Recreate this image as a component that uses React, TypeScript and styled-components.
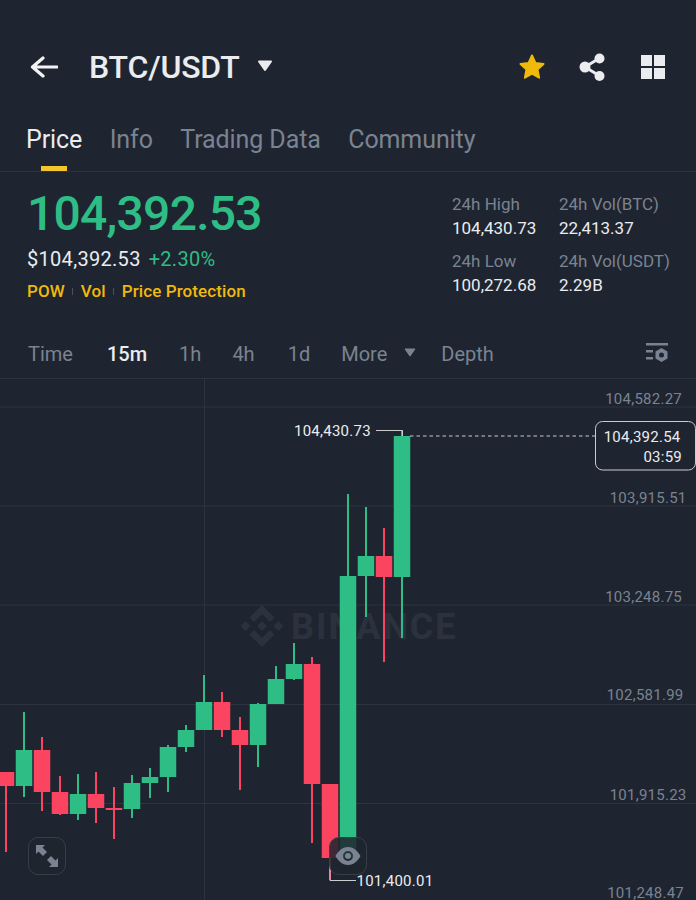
import styled, { createGlobalStyle } from "styled-components";

const GlobalStyle = createGlobalStyle`
  html, body {
    margin: 0;
    padding: 0;
    background: #1f2530;
  }
  body {
    font-family: Roboto, "Noto Sans", sans-serif;
    overflow: hidden;
  }
`;

const GREEN = "#2ebd85";
const RED = "#fb4560";

const Page = styled.div`
  width: 696px;
  height: 900px;
  overflow: hidden;
  background: #1f2530;
  color: #eaecef;
`;

const Header = styled.header`
  display: flex;
  align-items: center;
  height: 32px;
  padding: 51px 31px 0 30px;
`;

const BackIcon = styled.svg`
  width: 28px;
  height: 24px;
  margin-right: 31px;
`;

const Pair = styled.h1`
  margin: 0;
  font-size: 32px;
  line-height: 32px;
  font-weight: 500;
  letter-spacing: -0.2px;
`;

const PairCaret = styled.svg`
  width: 16px;
  height: 12px;
  margin-left: 17px;
  margin-top: -3px;
`;

const HeaderActions = styled.div`
  display: flex;
  align-items: center;
  margin-left: auto;
`;

const ActionIcon = styled.svg<{ $gap?: number }>`
  display: block;
  margin-left: ${(p) => p.$gap ?? 0}px;
`;

const Tabs = styled.nav`
  display: flex;
  gap: 27.5px;
  height: 47px;
  margin-top: 41px;
  padding: 0 26px;
  border-bottom: 1px solid #2d343f;
`;

const Tab = styled.div<{ $active?: boolean }>`
  position: relative;
  font-size: 25px;
  line-height: 32px;
  letter-spacing: -0.1px;
  color: ${(p) => (p.$active ? "#eaecef" : "#7a8391")};

  &::after {
    content: "";
    display: ${(p) => (p.$active ? "block" : "none")};
    position: absolute;
    left: 15px;
    bottom: 0;
    width: 26px;
    height: 5px;
    background: #f3c62d;
  }
`;

const Ticker = styled.section`
  display: flex;
  justify-content: space-between;
  height: 161px;
  padding: 0 0 0 27px;
`;

const PriceColumn = styled.div`
  display: flex;
  flex-direction: column;
`;

const LastPrice = styled.div`
  font-size: 48px;
  line-height: 56px;
  font-weight: 500;
  margin-top: 14px;
  letter-spacing: -0.75px;
  color: ${GREEN};
`;

const FiatRow = styled.div`
  display: flex;
  gap: 8px;
  font-size: 20px;
  line-height: 26px;
  letter-spacing: 0.3px;
  margin-top: 4px;
`;

const Change = styled.span`
  color: ${GREEN};
`;

const TagRow = styled.div`
  display: flex;
  align-items: center;
  gap: 7.5px;
  margin-top: 7px;
  font-size: 17px;
  line-height: 24px;
  letter-spacing: 0.1px;
  font-weight: 500;
  color: #f0b90b;
`;

const TagDivider = styled.i`
  width: 1px;
  height: 7px;
  background: #4a515c;
`;

const Stats = styled.div`
  display: grid;
  grid-template-columns: 107px 137px;
  align-content: start;
  row-gap: 9px;
  margin-top: 20px;
`;

const StatCell = styled.div`
  display: flex;
  flex-direction: column;
`;

const StatLabel = styled.span`
  font-size: 17px;
  line-height: 24px;
  color: #7a8391;
`;

const StatValue = styled.span`
  font-size: 17px;
  line-height: 24px;
  color: #eaecef;
`;

const Intervals = styled.div`
  display: flex;
  align-items: center;
  height: 42px;
  padding: 0 28px 3px;
  font-size: 20px;
  color: #7a8391;
  border-bottom: 1px solid #2d343f;
`;

const Interval = styled.span<{ $active?: boolean; $gap: number }>`
  margin-right: ${(p) => p.$gap}px;
  color: ${(p) => (p.$active ? "#eaecef" : "#7a8391")};
  font-weight: ${(p) => (p.$active ? 500 : 400)};
`;

const IntervalCaret = styled.svg`
  width: 12px;
  height: 9px;
  margin-right: 25px;
  margin-top: -3px;
`;

const SettingsIcon = styled.svg`
  width: 24px;
  height: 24px;
  margin-left: auto;
  margin-right: -1px;
`;

const ChartArea = styled.div`
  position: relative;
  width: 696px;
  height: 521px;
`;

const ChartSvg = styled.svg`
  display: block;
  width: 696px;
  height: 521px;
`;

const AxisLabel = styled.text`
  font-family: Roboto, sans-serif;
  font-size: 15px;
  letter-spacing: 0.25px;
  fill: #7a8391;
  text-anchor: end;
`;

const MarkLabel = styled.text`
  font-family: Roboto, sans-serif;
  font-size: 15px;
  letter-spacing: 0.25px;
  fill: #eaecef;
`;

const Watermark = styled.text`
  font-family: Roboto, sans-serif;
  font-size: 36px;
  font-weight: 700;
  letter-spacing: 2px;
  fill: #2b323d;
`;

const OverlayButton = styled.div<{ $left: number }>`
  position: absolute;
  left: ${(p) => p.$left}px;
  top: 458px;
  width: 38px;
  height: 38px;
  box-sizing: border-box;
  display: flex;
  align-items: center;
  justify-content: center;
  border: 1.5px solid #373e49;
  border-radius: 10px;
  background: rgba(31, 37, 48, 0.86);
`;

// x is derived from the index, columns are 18px apart
const candles: [number, number, number, number, boolean][] = [
  [772, 772, 786, 852, false],
  [712, 750, 786, 797, true],
  [737, 750, 792, 811, false],
  [776, 792, 814, 815, false],
  [774, 794, 814, 820, true],
  [772, 794, 808, 823, false],
  [787, 808, 810, 839, false],
  [775, 783, 809, 818, true],
  [768, 777, 783, 798, true],
  [745, 747, 777, 792, true],
  [725, 730, 747, 752, true],
  [675, 702, 730, 730, true],
  [692, 702, 730, 737, false],
  [717, 730, 745, 790, false],
  [703, 704, 745, 767, true],
  [666, 679, 704, 704, true],
  [643, 664, 679, 680, true],
  [657, 664, 784, 843, false],
  [784, 784, 858, 880, false],
  [494, 576, 858, 858, true],
  [507, 556, 576, 617, true],
  [528, 556, 577, 662, false],
  [430, 436, 577, 638, true],
];

const axis = [
  { price: "104,582.27", x: 682, y: 404 },
  { price: "103,915.51", x: 686.5, y: 503 },
  { price: "103,248.75", x: 682, y: 602 },
  { price: "102,581.99", x: 683.5, y: 700 },
  { price: "101,915.23", x: 686.5, y: 800 },
  { price: "101,248.47", x: 684, y: 898 },
];

const gridLines = [407, 506, 605, 704.5, 803.5];

const stats = [
  { label: "24h High", value: "104,430.73" },
  { label: "24h Vol(BTC)", value: "22,413.37" },
  { label: "24h Low", value: "100,272.68" },
  { label: "24h Vol(USDT)", value: "2.29B" },
];

const Caret = ({ color }: { color: string }) => (
  <path d="M2 1.5h12L8 10z" fill={color} stroke={color} strokeWidth="2" strokeLinejoin="round" />
);

const Chart = () => (
  <ChartSvg viewBox="0 379 696 521">
    {gridLines.map((y) => (
      <line key={y} x1="0" x2="696" y1={y} y2={y} stroke="#2d343f" strokeWidth="1" />
    ))}
    <line x1="204.5" x2="204.5" y1="379" y2="900" stroke="#2d343f" strokeWidth="1" />

    <g fill="#2b323d">
      <path d="M262 605l12.5 12.5-4.5 4.5-8-8-8 8-4.5-4.5z" />
      <path d="M262 647l12.5-12.5-4.5-4.5-8 8-8-8-4.5 4.5z" />
      <path d="M262 621l5 5-5 5-5-5z" />
      <path d="M245.500 621l5 5-5 5-5-5z" />
      <path d="M278.500 621l5 5-5 5-5-5z" />
    </g>
    <Watermark x="291" y="639">BINANCE</Watermark>

    {candles.map(([high, top, bottom, low, up], i) => {
      const cx = 6 + i * 18;
      const color = up ? GREEN : RED;
      return (
        <g key={i} fill={color}>
          <rect x={cx - 1} y={high} width="2" height={low - high} />
          <rect x={cx - 8.25} y={top} width="16.500" height={bottom - top} />
        </g>
      );
    })}

    {axis.map((a) => (
      <AxisLabel key={a.price} x={a.x} y={a.y}>{a.price}</AxisLabel>
    ))}

    <path d="M376 430.500h26.500v5.500" fill="none" stroke="#c9ccd1" strokeWidth="1" />
    <MarkLabel x="294" y="436">104,430.73</MarkLabel>
    <path d="M330 858v22.500h26" fill="none" stroke="#c9ccd1" strokeWidth="1" />
    <MarkLabel x="356.500" y="886">101,400.01</MarkLabel>

    <line x1="410" x2="595" y1="436" y2="436" stroke="#c9ccd1" strokeWidth="1" strokeDasharray="3.500 3" />
    <rect x="595.500" y="421.500" width="100" height="48.500" rx="7" fill="#1f2530" stroke="#c9ccd1" strokeWidth="1" />
    <MarkLabel x="680.500" y="442" textAnchor="end">104,392.54</MarkLabel>
    <MarkLabel x="682" y="462" textAnchor="end">03:59</MarkLabel>
  </ChartSvg>
);

export default function App() {
  return (
    <Page>
      <GlobalStyle />
      <Header>
        <BackIcon viewBox="0 0 28 24">
          <path d="M13 3L2.500 12 13 21M3 12h24" fill="none" stroke="#f2f3f5" strokeWidth="3.200" strokeLinecap="round" strokeLinejoin="round" />
        </BackIcon>
        <Pair>BTC/USDT</Pair>
        <PairCaret viewBox="0 0 16 12">
          <Caret color="#eaecef" />
        </PairCaret>
        <HeaderActions>
          <ActionIcon width="28" height="28" viewBox="0 0 28 28">
            <path d="M14 2.500l3.400 7.500 8.100 1-6 5.500 1.600 8.200L14 20.600l-7.100 4.100 1.600-8.200-6-5.500 8.100-1z" fill="#f0b90b" stroke="#f0b90b" strokeWidth="2" strokeLinejoin="round" />
          </ActionIcon>
          <ActionIcon $gap={33} width="26" height="28" viewBox="0 0 26 28">
            <path d="M20 5.500L6 14l14 8.500" fill="none" stroke="#eaecef" strokeWidth="3" />
            <circle cx="20.500" cy="5.500" r="5" fill="#eaecef" />
            <circle cx="6" cy="14" r="5.500" fill="#eaecef" />
            <circle cx="20.500" cy="23" r="5" fill="#eaecef" />
          </ActionIcon>
          <ActionIcon $gap={36} width="24" height="24" viewBox="0 0 24 24" fill="#eaecef">
            <rect x="0" y="0" width="11" height="11" />
            <rect x="13" y="0" width="11" height="11" />
            <rect x="0" y="13" width="11" height="11" />
            <rect x="13" y="13" width="11" height="11" />
          </ActionIcon>
        </HeaderActions>
      </Header>

      <Tabs>
        <Tab $active>Price</Tab>
        <Tab>Info</Tab>
        <Tab>Trading Data</Tab>
        <Tab>Community</Tab>
      </Tabs>

      <Ticker>
        <PriceColumn>
          <LastPrice>104,392.53</LastPrice>
          <FiatRow>
            <span>$104,392.53</span>
            <Change>+2.30%</Change>
          </FiatRow>
          <TagRow>
            <span>POW</span>
            <TagDivider />
            <span>Vol</span>
            <TagDivider />
            <span>Price Protection</span>
          </TagRow>
        </PriceColumn>
        <Stats>
          {stats.map((s) => (
            <StatCell key={s.label}>
              <StatLabel>{s.label}</StatLabel>
              <StatValue>{s.value}</StatValue>
            </StatCell>
          ))}
        </Stats>
      </Ticker>

      <Intervals>
        <Interval $gap={34}>Time</Interval>
        <Interval $gap={32} $active>15m</Interval>
        <Interval $gap={31}>1h</Interval>
        <Interval $gap={33}>4h</Interval>
        <Interval $gap={31}>1d</Interval>
        <Interval $gap={17}>More</Interval>
        <IntervalCaret viewBox="0 0 16 12">
          <Caret color="#7a8391" />
        </IntervalCaret>
        <Interval $gap={0}>Depth</Interval>
        <SettingsIcon viewBox="0 0 24 24" fill="#7a8391">
          <rect x="1" y="1" width="22" height="2.500" />
          <rect x="1" y="8" width="7" height="2.500" />
          <rect x="1" y="15" width="7" height="2.500" />
          <path fillRule="evenodd" d="M16.500 6l6 3.500v7l-6 3.500-6-3.500v-7zm0 4.500a2.500 2.500 0 100 5 2.500 2.500 0 000-5z" />
        </SettingsIcon>
      </Intervals>

      <ChartArea>
        <Chart />
        <OverlayButton $left={28}>
          <svg width="24" height="24" viewBox="0 0 24 24" fill="#7a8391">
            <path d="M1 1h9L7.500 3.500 12 8l-4 4-4.500-4.500L1 10z" />
            <path d="M23 23h-9l2.500-2.500L12 16l4-4 4.500 4.500L23 14z" />
          </svg>
        </OverlayButton>
        <OverlayButton $left={329}>
          <svg width="26" height="20" viewBox="0 0 26 20">
            <path fillRule="evenodd" d="M13 1c6 0 10.500 5 12.500 9-2 4-6.500 9-12.500 9S2.500 14 .5 10C2.500 6 7 1 13 1zm0 4a5 5 0 100 10 5 5 0 000-10z" fill="#7a8391" />
            <circle cx="13" cy="10" r="3" fill="#7a8391" />
          </svg>
        </OverlayButton>
      </ChartArea>
    </Page>
  );
}
